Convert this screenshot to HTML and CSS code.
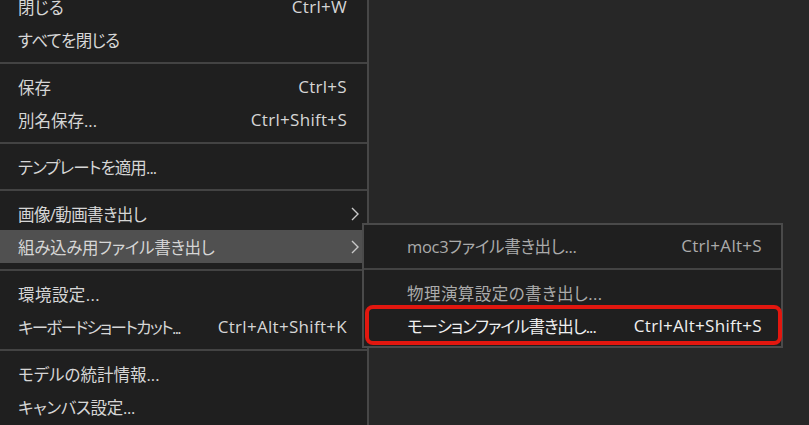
FILE: index.html
```html
<!DOCTYPE html>
<html lang="ja">
<head>
<meta charset="utf-8">
<title>File menu</title>
<link rel="stylesheet" href="styles.css">
</head>
<body>
<div class="screen">
  <div class="menu main">
    <div class="item"><span class="label">閉じる</span><span class="key">Ctrl+W</span><span class="arrow"></span></div>
    <div class="item"><span class="label ls-a">すべてを閉じる</span><span class="key"></span><span class="arrow"></span></div>
    <div class="sep"></div>
    <div class="item"><span class="label">保存</span><span class="key">Ctrl+S</span><span class="arrow"></span></div>
    <div class="item"><span class="label">別名保存...</span><span class="key">Ctrl+Shift+S</span><span class="arrow"></span></div>
    <div class="sep"></div>
    <div class="item"><span class="label ls-b">テンプレートを適用...</span><span class="key"></span><span class="arrow"></span></div>
    <div class="sep"></div>
    <div class="item"><span class="label ls-a">画像/動画書き出し</span><span class="key"></span><span class="arrow"><svg width="8" height="14" viewBox="0 0 8 14"><polyline points="1,1 7,7 1,13" /></svg></span></div>
    <div class="item active"><span class="label ls-e">組み込み用ファイル書き出し</span><span class="key"></span><span class="arrow"><svg width="8" height="14" viewBox="0 0 8 14"><polyline points="1,1 7,7 1,13" /></svg></span></div>
    <div class="sep"></div>
    <div class="item"><span class="label ls-w">環境設定...</span><span class="key"></span><span class="arrow"></span></div>
    <div class="item"><span class="label ls-c">キーボードショートカット...</span><span class="key">Ctrl+Alt+Shift+K</span><span class="arrow"></span></div>
    <div class="sep"></div>
    <div class="item"><span class="label">モデルの統計情報...</span><span class="key"></span><span class="arrow"></span></div>
    <div class="item"><span class="label ls-e">キャンバス設定...</span><span class="key"></span><span class="arrow"></span></div>
  </div>
  <div class="menu sub">
    <div class="item"><span class="label ls-e">moc3ファイル書き出し...</span><span class="key">Ctrl+Alt+S</span><span class="arrow"></span></div>
    <div class="sep"></div>
    <div class="item"><span class="label ls-w">物理演算設定の書き出し...</span><span class="key"></span><span class="arrow"></span></div>
    <div class="item hover"><span class="label ls-d">モーションファイル書き出し...</span><span class="key">Ctrl+Alt+Shift+S</span><span class="arrow"></span><span class="callout"></span></div>
  </div>
</div>
</body>
</html>
```
FILE: styles.css
```css
* { box-sizing: border-box; }
html, body { margin: 0; padding: 0; background: #272727; }
.screen {
  position: relative;
  width: 809px;
  height: 425px;
  overflow: hidden;
  background: #272727;
  font-family: "Open Sans", "Noto Sans CJK JP", sans-serif;
  font-size: 16.5px;
  font-feature-settings: "palt";
  color: #d6d6d6;
}
.menu { background: #1f1f1f; }
.main {
  width: 369px;
  margin-top: -10px;
  height: 445px;
  border-right: 2px solid #474747;
}
.item {
  position: relative;
  display: flex;
  align-items: center;
  height: 33px;
  padding-left: 18px;
  white-space: nowrap;
}
.item.active { background: #505050; }
.label { flex: 1; }
.ls-a { letter-spacing: -0.6px; }
.ls-b { letter-spacing: -0.9px; }
.ls-c { letter-spacing: -1.7px; }
.ls-d { letter-spacing: -1px; }
.ls-e { letter-spacing: -0.3px; }
.ls-w { letter-spacing: 0.45px; }
.key {
  font-family: "Open Sans", sans-serif;
  font-size: 17px;
  letter-spacing: 0.3px;
}
.arrow {
  width: 20px;
  display: flex;
  align-items: center;
  padding-left: 4px;
}
.arrow svg polyline {
  fill: none;
  stroke: #c9c9c9;
  stroke-width: 1.4;
}
.sep {
  height: 14px;
  padding: 6px 0;
}
.sep::before {
  content: "";
  display: block;
  height: 2px;
  background: #434343;
}
.sub {
  position: absolute;
  left: 362px;
  top: 223px;
  width: 421px;
  padding: 4px 0;
  border: 2px solid #4a4a4a;
  color: #ababab;
}
.sub .item { padding-left: 43px; }
.sub .arrow { width: 19px; }
.sub .item.hover { color: #f0f0f0; }
.callout {
  position: absolute;
  left: 1px;
  right: -1px;
  top: -4px;
  bottom: -3px;
  border: 4px solid #e2170f;
  border-radius: 8px;
}
```
